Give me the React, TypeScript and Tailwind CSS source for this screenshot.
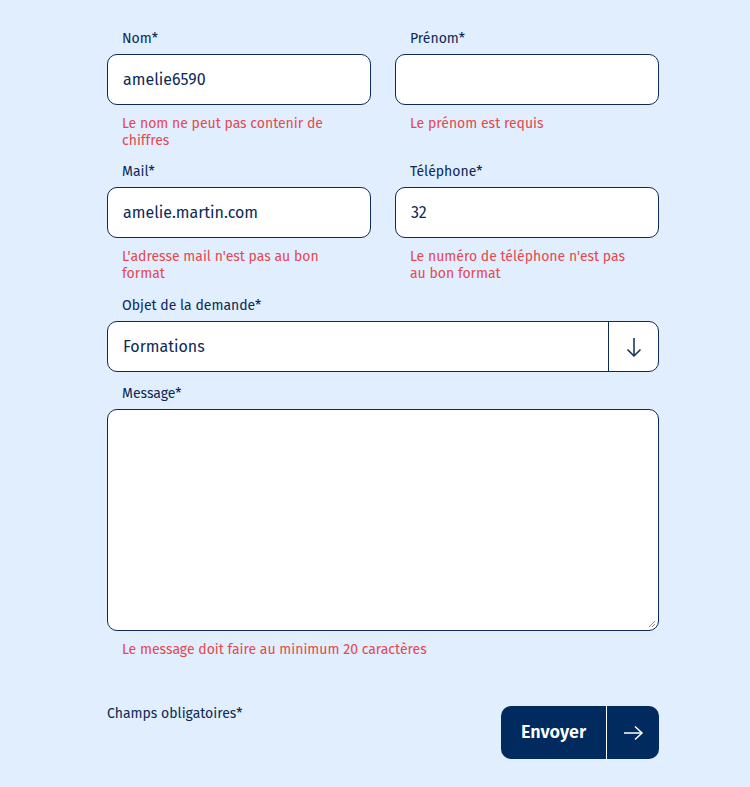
import React from "react";

const font = { fontFamily: '"Fira Sans", "Noto Sans", "Open Sans", sans-serif' };

function Label({ children }: { children: React.ReactNode }) {
  return <div className="pl-[15px] text-[14px] leading-[17px] text-[#0b2a55] h-[17px] mb-[7px]">{children}</div>;
}

function Err({ children }: { children: React.ReactNode }) {
  return <div className="pl-[15px] pr-[30px] mt-[10px] text-[14px] leading-[17px] text-[#e5484f]">{children}</div>;
}

function Input({ value }: { value: string }) {
  return (
    <div className="h-[51px] rounded-[10px] border border-[#0b2a55] bg-white flex items-center px-[15px] text-[16px] text-[#0b2a55]">
      {value}
    </div>
  );
}

export default function App() {
  return (
    <div style={font} className="min-h-[787px] w-full bg-[#e0eefe]">
      <div className="w-[552px] ml-[107px] pt-[30px]">
        <div className="grid grid-cols-2 gap-x-[24px]">
          <div className="h-[133px]">
            <Label>Nom*</Label>
            <Input value="amelie6590" />
            <Err>Le nom ne peut pas contenir de chiffres</Err>
          </div>
          <div className="h-[133px]">
            <Label>Prénom*</Label>
            <Input value="" />
            <Err>Le prénom est requis</Err>
          </div>
          <div className="h-[134px]">
            <Label>Mail*</Label>
            <Input value="amelie.martin.com" />
            <Err>L'adresse mail n'est pas au bon format</Err>
          </div>
          <div className="h-[134px]">
            <Label>Téléphone*</Label>
            <Input value="32" />
            <Err>Le numéro de téléphone n'est pas au bon format</Err>
          </div>
        </div>
        <Label>Objet de la demande*</Label>
        <div className="h-[51px] rounded-[10px] border border-[#0b2a55] bg-white flex items-stretch text-[16px] text-[#0b2a55]">
          <div className="flex-1 flex items-center px-[15px]">Formations</div>
          <div className="w-[50px] border-l border-[#0b2a55] flex items-center justify-center">
            <svg width="20" height="22" viewBox="0 0 20 22" fill="none" stroke="#0b2a55" strokeWidth="1.5">
              <path d="M10 2 V20" />
              <path d="M3.5 13.5 L10 20 L16.5 13.5" />
            </svg>
          </div>
        </div>
        <div className="mt-[13px]">
          <Label>Message*</Label>
        </div>
        <div className="relative h-[222px] rounded-[10px] border border-[#0b2a55] bg-white">
          <svg className="absolute right-[2px] bottom-[2px]" width="9" height="9" viewBox="0 0 9 9" stroke="#888" strokeWidth="1">
            <path d="M8 2 L2 8" />
            <path d="M8 5 L5 8" />
          </svg>
        </div>
        <Err>Le message doit faire au minimum 20 caractères</Err>
        <div className="mt-[48px] flex items-start justify-between">
          <div className="text-[14px] leading-[17px] text-[#0b2a55] mt-[-1px]">Champs obligatoires*</div>
          <div className="h-[53px] w-[158px] rounded-[10px] bg-[#012a5e] flex items-stretch text-white">
            <div className="w-[105px] flex items-center justify-center text-[18px] font-semibold">Envoyer</div>
            <div className="w-px bg-white" />
            <div className="flex-1 flex items-center justify-center">
              <svg width="22" height="16" viewBox="0 0 22 16" fill="none" stroke="white" strokeWidth="1.5">
                <path d="M2 8 H20" />
                <path d="M13 1.5 L20 8 L13 14.5" />
              </svg>
            </div>
          </div>
        </div>
      </div>
    </div>
  );
}
